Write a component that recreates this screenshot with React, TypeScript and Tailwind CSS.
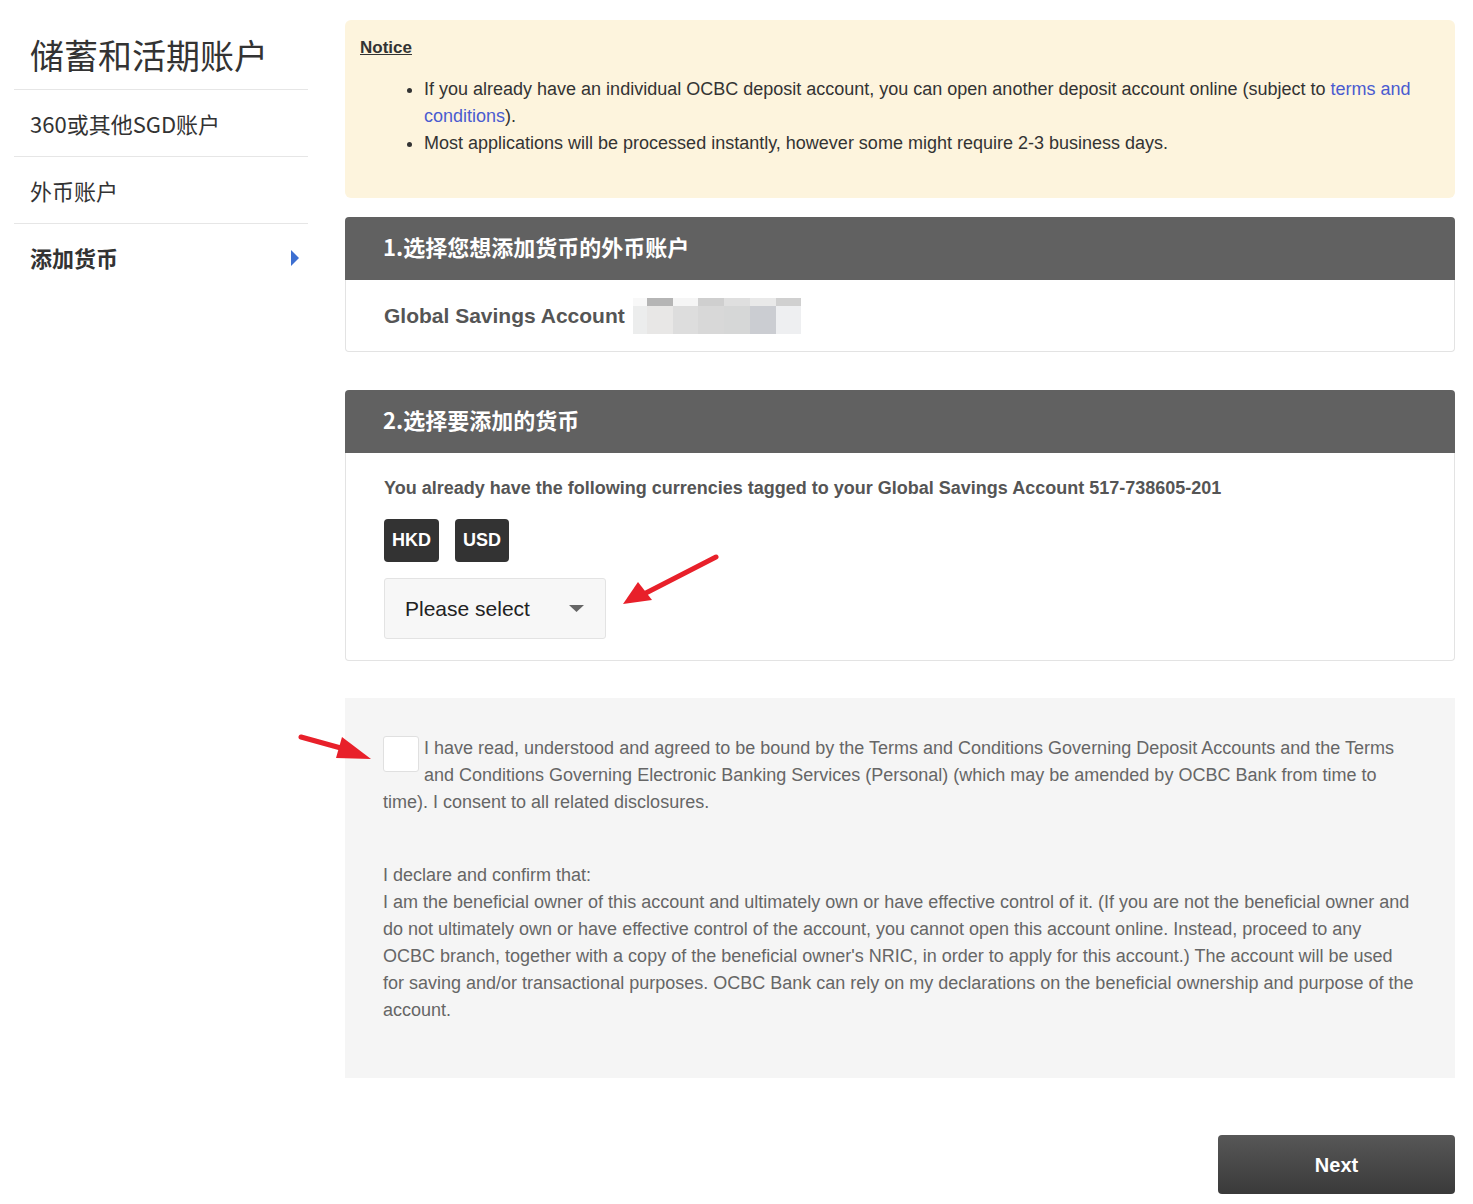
const cjk = "font-['Noto_Sans_CJK_SC','Noto_Sans',sans-serif]";
const arial = "font-['Liberation_Sans',Arial,'Noto_Sans_CJK_SC',sans-serif]";

const blurTop = ["#f8f8f8", "#b5b5b5", "#f5f5f5", "#cfcfcf", "#dfdfdf", "#e9e9e9", "#d0d0d0"];
const blurMain = ["#eceded", "#e8e7e6", "#dddddd", "#d8d8d8", "#d6d7d7", "#cbcdd2", "#eeeff1"];
const blurWidths = [14, 26, 25, 26, 26, 26, 25];

function Sidebar() {
	return (
		<aside className={`w-[294px] shrink-0 ${cjk} text-[#333]`}>
			<div className="h-[70px] flex items-center px-4 border-b border-[#e6e6e6] text-[34px] leading-none">储蓄和活期账户</div>
			<div className="h-[67px] flex items-center px-4 border-b border-[#e6e6e6] text-[22px]">360或其他SGD账户</div>
			<div className="h-[67px] flex items-center px-4 border-b border-[#e6e6e6] text-[22px]">外币账户</div>
			<div className="h-[67px] flex items-center justify-between pl-4 pr-[8px] text-[22px] font-bold">
				<span>添加货币</span>
				<svg width="10" height="16" viewBox="0 0 10 16"><path d="M1 0 L9 8 L1 16 Z" fill="#3d6fd1" /></svg>
			</div>
		</aside>
	);
}

function SectionHeader({ title }: { title: string }) {
	return (
		<div className={`h-[63px] bg-[#616161] rounded-t-[4px] flex items-center px-[38px] pb-[5px] text-white text-[22px] font-bold ${cjk}`}>{title}</div>
	);
}

export default function App() {
	return (
		<div className={`relative flex gap-[37px] pl-[14px] pr-[18px] pt-[20px] pb-[10px] bg-white ${arial}`}>
			<Sidebar />
			<main className="flex-1 flex flex-col">
				<div className="bg-[#fdf4dd] rounded-[6px] pl-[15px] pr-[40px] pt-[18px] pb-[41px] text-[#333]">
					<div className="text-[17px] leading-[20px] font-bold underline">Notice</div>
					<ul className="list-disc pl-[64px] mt-[18px] text-[18px] leading-[27px]">
						<li>If you already have an individual OCBC deposit account, you can open another deposit account online (subject to <a className="text-[#4a5bd0]">terms and conditions</a>).</li>
						<li>Most applications will be processed instantly, however some might require 2-3 business days.</li>
					</ul>
				</div>

				<section className="mt-[19px]">
					<SectionHeader title="1.选择您想添加货币的外币账户" />
					<div className="h-[72px] border border-t-0 border-[#e3e3e3] rounded-b-[4px] px-[38px] flex items-center">
						<span className="text-[21px] font-bold text-[#555]">Global Savings Account</span>
						<div className="ml-[8px] flex flex-col">
							<div className="flex h-[8px]">
								{blurTop.map((c, i) => <div key={i} style={{ background: c, width: blurWidths[i] }} />)}
							</div>
							<div className="flex h-[28px]">
								{blurMain.map((c, i) => <div key={i} style={{ background: c, width: blurWidths[i] }} />)}
							</div>
						</div>
					</div>
				</section>

				<section className="mt-[38px]">
					<SectionHeader title="2.选择要添加的货币" />
					<div className="border border-t-0 border-[#e3e3e3] rounded-b-[4px] px-[38px] pt-[23px] pb-[21px]">
						<div className="text-[18px] leading-[24px] font-bold text-[#555]">You already have the following currencies tagged to your Global Savings Account 517-738605-201</div>
						<div className="flex gap-[16px] mt-[19px]">
							<span className="w-[55px] h-[43px] rounded-[4px] bg-[#333] text-white font-bold text-[18px] flex items-center justify-center">HKD</span>
							<span className="w-[54px] h-[43px] rounded-[4px] bg-[#333] text-white font-bold text-[18px] flex items-center justify-center">USD</span>
						</div>
						<div className="mt-[16px] w-[222px] h-[61px] bg-[#f7f7f7] border border-[#e3e3e3] rounded-[3px] flex items-center justify-between pl-[20px] pr-[21px]">
							<span className="text-[21px] text-[#222]">Please select</span>
							<svg width="15" height="8" viewBox="0 0 15 8"><path d="M0 0 L15 0 L7.5 7 Z" fill="#666" /></svg>
						</div>
					</div>
				</section>

				<div className="mt-[37px] bg-[#f5f5f5] px-[38px] pt-[37px] pb-[54px] text-[18px] leading-[27px] text-[#666]">
					<p>
						<span className="float-left mt-[1px] mr-[5px] w-[36px] h-[36px] bg-white border border-[#e0e0e0] rounded-[3px]" />
						I have read, understood and agreed to be bound by the Terms and Conditions Governing Deposit Accounts and the Terms and Conditions Governing Electronic Banking Services (Personal) (which may be amended by OCBC Bank from time to time). I consent to all related disclosures.
					</p>
					<p className="mt-[46px]">
						I declare and confirm that:<br />
						I am the beneficial owner of this account and ultimately own or have effective control of it. (If you are not the beneficial owner and do not ultimately own or have effective control of the account, you cannot open this account online. Instead, proceed to any OCBC branch, together with a copy of the beneficial owner's NRIC, in order to apply for this account.) The account will be used for saving and/or transactional purposes. OCBC Bank can rely on my declarations on the beneficial ownership and purpose of the account.
					</p>
				</div>

				<div className="flex justify-end mt-[57px]">
					<button className="w-[237px] h-[59px] rounded-[4px] bg-gradient-to-b from-[#575757] to-[#3a3a3a] text-white font-bold text-[20px]">Next</button>
				</div>
			</main>

			<svg className="absolute left-[618px] top-[552px]" width="104" height="58" viewBox="0 0 104 58">
				<line x1="98" y1="5" x2="24" y2="43" stroke="#e8202a" strokeWidth="5" strokeLinecap="round" />
				<path d="M5 52 L20 30 L34 48 Z" fill="#e8202a" />
			</svg>
			<svg className="absolute left-[296px] top-[730px]" width="80" height="36" viewBox="0 0 80 36">
				<line x1="5" y1="7" x2="52" y2="20" stroke="#e8202a" strokeWidth="5" strokeLinecap="round" />
				<path d="M75 29 L46 7 L40 28 Z" fill="#e8202a" />
			</svg>
		</div>
	);
}
